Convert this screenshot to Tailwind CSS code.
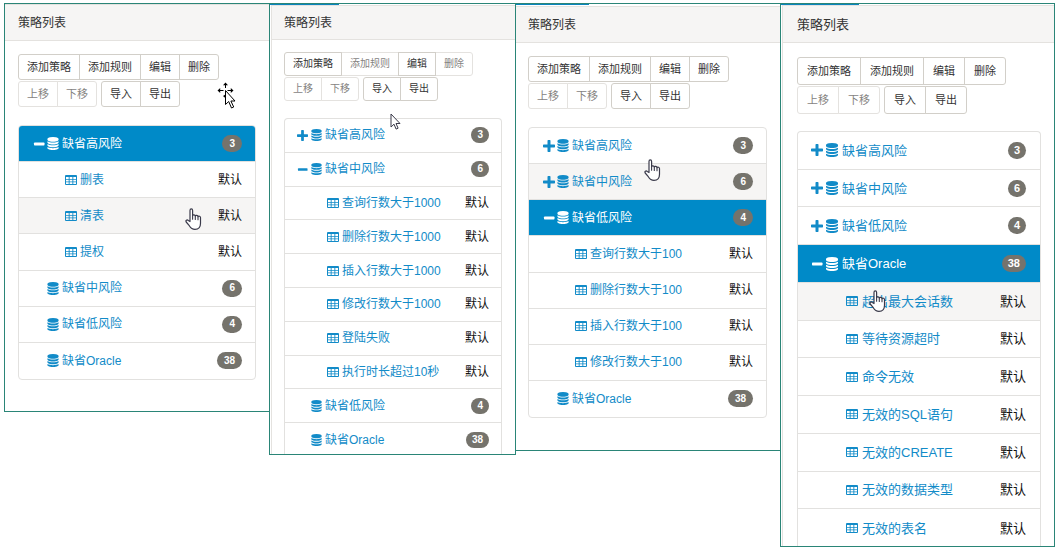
<!DOCTYPE html>
<html lang="zh-CN">
<head>
<meta charset="utf-8">
<title>策略列表</title>
<script src="https://cdn.jsdelivr.net/npm/@tailwindcss/browser@4"></script>
</head>
<body class="bg-white font-['Liberation_Sans','Noto_Sans_CJK_SC',sans-serif] text-black">
<svg class="hidden" aria-hidden="true">
  <symbol id="database" viewBox="0 0 1536 1792"><path fill="currentColor" d="M768 768q237 0 443-43t325-127v170q0 69-103 128t-280 93.5-385 34.5-385-34.5-280-93.5-103-128v-170q119 84 325 127t443 43zm0 768q237 0 443-43t325-127v170q0 69-103 128t-280 93.5-385 34.5-385-34.5-280-93.5-103-128v-170q119 84 325 127t443 43zm0-384q237 0 443-43t325-127v170q0 69-103 128t-280 93.5-385 34.5-385-34.5-280-93.5-103-128v-170q119 84 325 127t443 43zm0-1152q208 0 385 34.5t280 93.5 103 128v128q0 69-103 128t-280 93.5-385 34.5-385-34.5-280-93.5-103-128v-128q0-69 103-128t280-93.5 385-34.5z"/></symbol>
  <symbol id="table" viewBox="0 0 12 10"><path fill="currentColor" fill-rule="evenodd" d="M1 0h10a1 1 0 0 1 1 1v8a1 1 0 0 1-1 1H1a1 1 0 0 1-1-1V1a1 1 0 0 1 1-1zM1 2v1.9h2.7V2zM4.6 2v1.9h2.8V2zM8.3 2v1.9H11V2zM1 4.7v1.7h2.7V4.7zM4.6 4.7v1.7h2.8V4.7zM8.3 4.7v1.7H11V4.7zM1 7.2V9h2.7V7.2zM4.6 7.2V9h2.8V7.2zM8.3 7.2V9H11V7.2z"/></symbol>
  <symbol id="plus" viewBox="0 0 12 12"><path fill="currentColor" d="M5.2 0h1.6a.7.7 0 0 1 .7.7v3.8h3.8a.7.7 0 0 1 .7.7v1.6a.7.7 0 0 1-.7.7H7.5v3.8a.7.7 0 0 1-.7.7H5.2a.7.7 0 0 1-.7-.7V7.5H.7a.7.7 0 0 1-.7-.7V5.2a.7.7 0 0 1 .7-.7h3.800V.7a.7.7 0 0 1 .7-.7z"/></symbol>
  <symbol id="minus" viewBox="0 0 12 12"><rect x="1" y="4.600" width="10.500" height="2.800" rx=".7" fill="currentColor"/></symbol>
  <symbol id="hand" viewBox="0 0 17 22"><path fill="#fff" stroke="#3a3a4a" stroke-width="1.200" stroke-linejoin="round" d="M5 13.500V2.400C5 .4 7.600.4 7.600 2.400v5.300c.3-1.300 2.500-1.200 2.700.3.500-1.100 2.500-.9 2.700.6.700-.9 2.500-.5 2.500 1v5.600c0 3.500-2 6.100-5.500 6.100-3 0-4.300-1.300-5.700-3.600L1.200 14c-.9-1.600.8-2.800 2.100-1.500z"/><path fill="none" stroke="#3a3a4a" stroke-width="1.100" stroke-linecap="round" d="M7.600 7.500v3.700M10.300 8.200v3.200M13 9v2.800"/></symbol>
  <symbol id="arrow" viewBox="0 0 11 18"><path fill="#fff" stroke="#3a3a4a" stroke-width="1" stroke-linejoin="round" d="M1 1v13l3-2.800 2.100 4.900 2-.9-2.100-4.700H10z"/></symbol>
  <symbol id="move" viewBox="0 0 20 28"><path fill="#000" d="M8.500.5l2.500 2.700H9V6H8V3.200H6zM.5 8.500l2.700-2.500v2H6.500v1H3.200v2zM16.500 8.500l-2.700-2.500v2H10.500v1h3.300v2zM6 14l2-1.200v3z"/><path fill="#fff" stroke="#000" stroke-width="1" stroke-linejoin="miter" d="M8.500 8.500v14l3.200-3 2.800 6.500 2.200-1-2.800-6H18z"/></symbol>
</svg>

<main id="panels" class="grid grid-cols-[265fr_246fr_265fr_275fr] items-start pt-[3px] pl-1 pr-[5px]"></main>

<svg class="absolute left-[217px] top-[82px] w-5 h-7" aria-hidden="true"><use href="#move"/></svg>
<svg class="absolute left-[185px] top-[208px] w-[17px] h-[22px]" aria-hidden="true"><use href="#hand"/></svg>
<svg class="absolute left-[390px] top-[113px] w-[11px] h-[18px]" aria-hidden="true"><use href="#arrow"/></svg>
<svg class="absolute left-[644px] top-[159px] w-[17px] h-[22px]" aria-hidden="true"><use href="#hand"/></svg>
<svg class="absolute left-[869px] top-[290px] w-[17px] h-[22px]" aria-hidden="true"><use href="#hand"/></svg>

<script>
const medium = {
  title: "text-xs", button: "text-[11px] px-2 h-[26px]", groups: "gap-1", text: "text-xs",
  icon: "w-3 h-3", db: "w-3 h-[13px]", group: "pl-[14px] gap-[2px]", rule: "pl-[46px]", link: "gap-[3px]", right: "pr-[13px]",
  badge: "h-[17px] px-[7px] text-[10px]"
};
const small = {
  title: "text-xs", button: "text-[10px] px-2 h-6", groups: "gap-1", text: "text-xs",
  icon: "w-[11px] h-[11px]", db: "w-[11px] h-3", group: "pl-3 gap-[3px]", rule: "pl-[42px]", link: "gap-[3px]", right: "pr-3",
  badge: "h-4 px-[6px] text-[10px]"
};
const large = {
  title: "text-[13px]", button: "text-[11px] px-[9px] h-7", groups: "gap-1", text: "text-[13px]",
  icon: "w-3 h-3", db: "w-3 h-[14px]", group: "pl-[13px] gap-[3px]", rule: "pl-12", link: "gap-1", right: "pr-[14px]",
  badge: "h-[17px] px-[6px] text-[11px]"
};
// Group row: [name, count, toggle icon, state]; rule row: [name, null, null, state]
const panels = [
  { size: medium, frame: "h-[409px]", inner: "", head: "h-[37px]", tab: "", body: "pt-[13px] pl-[13px] pr-[13px] pb-[31px]", listGap: "mt-[18px]", list: "rounded border-b", off: [],
    rows: [["缺省高风险",3,"minus","active"],["删表"],["清表",null,null,"hover"],["提权"],["缺省中风险",6],["缺省低风险",4],["缺省Oracle",38]] },
  { size: small, frame: "h-[452px]", inner: "ml-px border-l border-[#e4e2df]", head: "h-[35px] mt-px", tab: "w-[69px]", body: "pt-3 pl-3 pr-[13px]", listGap: "mt-[17px]", list: "rounded-t -mb-[3px]", off: ["添加规则","删除"],
    rows: [["缺省高风险",3,"plus"],["缺省中风险",6,"minus"],["查询行数大于1000"],["删除行数大于1000"],["插入行数大于1000"],["修改行数大于1000"],["登陆失败"],["执行时长超过10秒"],["缺省低风险",4],["缺省Oracle",38]] },
  { size: medium, frame: "h-[448px]", inner: "", head: "h-[37px] mt-[2px]", tab: "w-[73px]", body: "pt-[13px] pl-[12px] pr-[13px] pb-8", listGap: "mt-[18px]", list: "rounded border-b", off: [],
    rows: [["缺省高风险",3,"plus"],["缺省中风险",6,"plus","hover"],["缺省低风险",4,"minus","active"],["查询行数大于100"],["删除行数大于100"],["插入行数大于100"],["修改行数大于100"],["缺省Oracle",38]] },
  { size: large, frame: "h-[544px]", inner: "ml-px border-l border-[#e4e2df]", head: "h-[38px] mt-px", tab: "w-[78px]", body: "pt-[14px] pl-[14px] pr-[13px]", listGap: "mt-[17px]", list: "rounded-t -mb-px", off: [],
    rows: [["缺省高风险",3,"plus"],["缺省中风险",6,"plus"],["缺省低风险",4,"plus"],["缺省Oracle",38,"minus","active"],["超出最大会话数",null,null,"hover"],["等待资源超时"],["命令无效"],["无效的SQL语句"],["无效的CREATE"],["无效的数据类型"],["无效的表名"]] }
];

const buttons = (names, s, off) => `<div class="flex">${names.map(n => {
  const disabled = off.includes(n) || n === "上移" || n === "下移";
  return `<button type="button" ${disabled ? "disabled" : ""} class="${s.button} relative -ml-px first:ml-0 first:rounded-l-[3px] last:rounded-r-[3px] border whitespace-nowrap leading-none ${disabled ? "border-[#e4e2df] text-[#85837f]" : "z-10 border-[#d2cfc9] text-[#333]"}">${n}</button>`;
}).join("")}</div>`;

const row = ([name, count, toggle, state], s) => {
  const color = state === "active" ? "bg-[#008ac8] text-white" : state === "hover" ? "bg-[#f6f5f4] text-[#128bc8]" : "text-[#128bc8]";
  const isGroup = count != null;
  const lead = !isGroup ? "" : toggle
    ? `<button type="button" aria-label="${toggle === "plus" ? "展开" : "收起"}" class="${s.icon} shrink-0"><svg class="${s.icon}"><use href="#${toggle}"/></svg></button>`
    : `<span class="${s.icon} shrink-0"></span>`;
  const icon = isGroup ? `<svg class="${s.db} shrink-0"><use href="#database"/></svg>` : `<svg class="w-3 h-[10px] shrink-0"><use href="#table"/></svg>`;
  const end = isGroup
    ? `<span class="${s.badge} ml-auto flex items-center rounded-full bg-[#75736c] font-bold leading-none text-white">${count}</span>`
    : `<span class="ml-auto text-[#111]">默认</span>`;
  return `<li class="${s.text} ${isGroup ? s.group : s.rule} ${s.right} ${color} flex items-center leading-none whitespace-nowrap border-b border-[#e2e1df] last:border-b-0">${lead}<a href="#" class="${s.link} flex items-center">${icon}<span>${name}</span></a>${end}</li>`;
};

document.getElementById("panels").innerHTML = panels.map(p => `
<section class="${p.frame} relative -mr-px last:mr-0 flex flex-col border border-[#2a8577] bg-white overflow-hidden">
  ${p.tab ? `<div class="${p.tab} absolute left-0 top-0 h-px bg-[#0a84bd]"></div>` : ""}
  <div class="${p.inner} flex flex-1 flex-col min-h-0">
    <h2 class="${p.head} ${p.size.title} ${p.body.split(" ").find(c => c.startsWith("pl-"))} shrink-0 flex items-center border-y border-[#e4e2df] bg-[#f6f5f4] leading-none text-[#333]">策略列表</h2>
    <div class="${p.body} flex flex-1 flex-col min-h-0">
      <div class="flex flex-col gap-px">
        ${buttons(["添加策略","添加规则","编辑","删除"], p.size, p.off)}
        <div class="flex ${p.size.groups}">${buttons(["上移","下移"], p.size, p.off)}${buttons(["导入","导出"], p.size, p.off)}</div>
      </div>
      <ul class="${p.listGap} ${p.list} grid flex-1 auto-rows-fr overflow-hidden border-x border-t border-[#e2e1df]">${p.rows.map(r => row(r, p.size)).join("")}</ul>
    </div>
  </div>
</section>`).join("");
</script>
</body>
</html>
